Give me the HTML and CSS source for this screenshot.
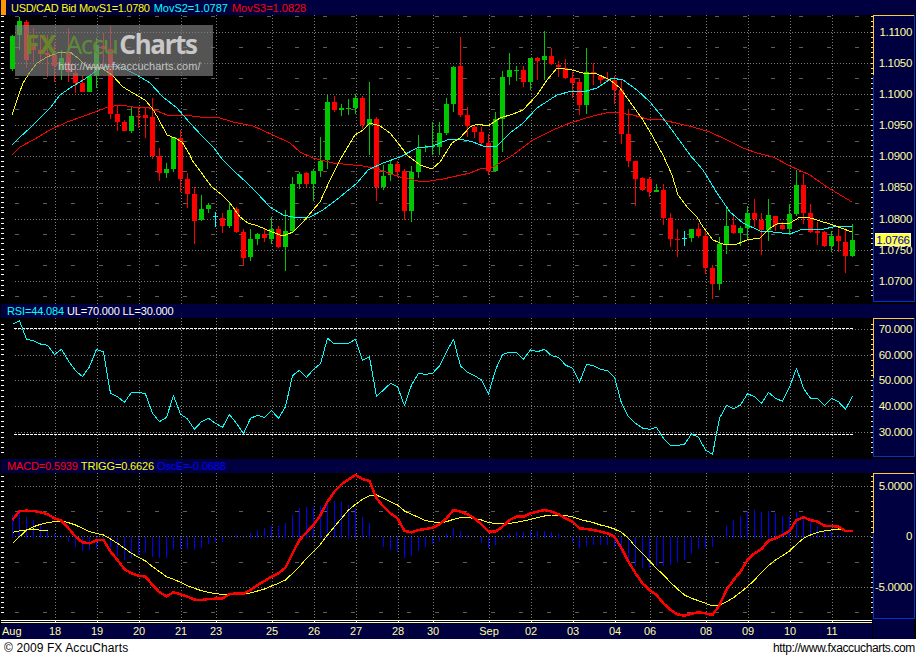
FILE: index.html
```html
<!DOCTYPE html>
<html lang="en">
<head>
    <meta charset="UTF-8">
    <meta name="viewport" content="width=device-width, initial-scale=1.0">
    <title>USD/CAD - FX AccuCharts</title>
    <link rel="stylesheet" href="styles.css">
</head>
<body>
    <div class="chart">
        <div class="panel-head panel-head-main">
            <span class="symbol-tab"></span>
            <span class="label-yellow label-tight">USD/CAD Bid MovS1=1.0780</span>
            <span class="label-cyan">MovS2=1.0787</span>
            <span class="label-red">MovS3=1.0828</span>
        </div>
        <div class="panel panel-price">
            <svg id="price" width="916" height="289" viewBox="0 15 916 289"></svg>
            <div class="watermark">
                <div class="watermark-logo"><span class="logo-fx">FX</span><span class="logo-accu">Accu</span><span class="logo-charts">Charts</span></div>
                <div class="watermark-url">http://www.fxaccucharts.com/</div>
            </div>
        </div>
        <div class="panel-head">
            <span class="label-cyan">RSI=44.084</span>
            <span class="label-white">UL=70.000 LL=30.000</span>
        </div>
        <div class="panel panel-rsi">
            <svg id="rsi" width="916" height="141" viewBox="0 318 916 141"></svg>
        </div>
        <div class="panel-head">
            <span class="label-red">MACD=0.5939</span>
            <span class="label-yellow">TRIGG=0.6626</span>
            <span class="label-blue">OscE=-0.0688</span>
        </div>
        <div class="panel panel-macd">
            <svg id="macd" width="916" height="147" viewBox="0 473 916 147"></svg>
        </div>
        <div class="panel panel-dates">
            <svg id="dates" width="916" height="19" viewBox="0 620 916 19"></svg>
        </div>
    </div>
    <div class="footer">
        <span class="footer-copy">© 2009 FX AccuCharts</span>
        <span class="footer-url">http://www.fxaccucharts.com</span>
    </div>
    <script src="chart.js"></script>
</body>
</html>
```
FILE: styles.css
```css
body{
    margin: 0;
    background-color: white;
    font-family: "Liberation Sans", Arial, sans-serif;
    font-size: 11px;
}
.chart{
    background-color: black;
    width: 916px;
    height: 639px;
    overflow: hidden;
}
.panel{
    position: relative;
}
.panel svg{
    display: block;
}
.panel-price{
    height: 289px;
}
.panel-rsi{
    height: 141px;
}
.panel-macd{
    height: 147px;
}
.panel-dates{
    height: 19px;
}
.panel-head{
    display: flex;
    align-items: center;
    gap: 3px;
    height: 14px;
    margin-left: 1px;
    padding-left: 6px;
    background-color: #000040;
    white-space: nowrap;
    letter-spacing: -0.15px;
}
.panel-head-main{
    gap: 4px;
    height: 15px;
    padding-left: 0;
    letter-spacing: 0;
}
.symbol-tab{
    width: 5px;
    height: 15px;
    margin-right: 1px;
    background-color: #ff9900;
}
.label-tight{
    letter-spacing: -0.3px;
}
.label-yellow{
    color: #ffff00;
}
.label-cyan{
    color: #00ffff;
}
.label-red{
    color: #ff0000;
}
.label-white{
    color: #ffffff;
}
.label-blue{
    color: #0000ff;
}
.watermark{
    position: absolute;
    left: 15px;
    top: 10px;
    width: 198px;
    height: 51px;
    background-color: rgba(128, 128, 128, 0.66);
}
.watermark-logo{
    display: flex;
    height: 34px;
    padding-left: 10px;
    font-family: "Noto Sans", sans-serif;
    font-size: 26px;
    line-height: 38px;
    white-space: nowrap;
}
.logo-fx{
    margin-right: 9px;
    color: #6a8528;
    font-weight: bold;
}
.logo-accu{
    margin-right: 2px;
    color: #5f8a3c;
    letter-spacing: -1.5px;
}
.logo-charts{
    color: #c8c8c8;
    font-weight: bold;
    letter-spacing: -1.3px;
}
.watermark-url{
    padding-left: 43px;
    color: #c4c4c4;
    font-size: 11px;
    line-height: 14px;
}
.footer{
    display: flex;
    justify-content: space-between;
    height: 18px;
    padding: 1px 1px 0 4px;
    color: black;
    font-size: 12px;
    line-height: 16px;
}
.footer-copy{
    letter-spacing: 0.1px;
}
.footer-url{
    letter-spacing: -0.37px;
}

/* chart marks */
.up{
    fill: #00c800;
}
.down{
    fill: #ff0000;
}
.doji{
    fill: #00ffff;
}
.grid-major, .grid-minor, .grid-date, .level, .ma, .tick, .frame{
    fill: none;
    shape-rendering: crispEdges;
}
.grid-major, .grid-date{
    stroke: #7a7a7a;
    stroke-dasharray: 1 2;
}
.grid-minor{
    stroke: #5c5c5c;
    stroke-dasharray: 4 24;
}
.level{
    stroke: #ffffff;
    stroke-dasharray: 3 1;
}
.ma{
    stroke-linejoin: round;
}
.ma-yellow{
    stroke: #ffff00;
}
.ma-cyan{
    stroke: #00ffff;
}
.ma-red{
    stroke: #ff0000;
}
.ma-macd{
    stroke: #ff0000;
    stroke-width: 2.5;
}
.hist{
    stroke: #0000ff;
    fill: none;
    shape-rendering: crispEdges;
}
.tick-left{
    stroke: #ffffff;
}
.tick-right{
    stroke: #ffe080;
}
.axis-fill{
    fill: #000040;
}
.frame-gold{
    stroke: #ffcc33;
}
.frame-blue{
    stroke: #0033cc;
}
.axis-label{
    fill: #ffffa0;
    font-size: 11.5px;
    letter-spacing: -0.3px;
    text-anchor: end;
}
.date-label{
    fill: #ffffa0;
    font-size: 11px;
    text-anchor: middle;
}
.date-first{
    text-anchor: start;
}
.date-line-white{
    stroke: #ffffff;
    shape-rendering: crispEdges;
}
.date-line-yellow{
    stroke: #ffffa0;
    shape-rendering: crispEdges;
}
.last-price-box{
    fill: #ffff40;
    stroke: #ffffc0;
    shape-rendering: crispEdges;
}
.last-price{
    fill: #0000c0;
    font-size: 11.5px;
    letter-spacing: -0.3px;
    text-anchor: middle;
}
```
FILE: chart.js
```js
// candle x = 12 + 7 * index, 121 candles
// [bodyTop, bodyBottom, wickTop, wickBottom, kind]
var U = 'up', D = 'down', X = 'doji';
var candles = [
    [36,69,35,71,U],[21,35,17,50,U],[22,60,20,68,D],[46,50,28,62,D],[50,54,35,63,D],[53,55,35,77,D],
    [55,66,43,82,D],[58,70,50,80,U],[53,72,28,82,D],[73,83,67,93,D],[83,92,75,92,D],[76,92,75,92,U],
    [45,76,38,88,U],[46,49,33,67,D],[49,114,26,119,D],[114,122,106,131,D],[122,131,120,131,D],[116,131,107,133,U],
    [116,117,107,128,D],[115,118,107,138,D],[117,156,98,159,D],[156,173,148,181,D],[169,173,163,178,U],[137,169,137,172,U],
    [138,179,130,192,D],[179,194,173,208,D],[194,221,187,244,D],[209,220,195,221,U],[205,209,203,213,U],[216,217,212,227,X],
    [218,226,213,233,D],[210,226,203,228,U],[209,232,207,233,D],[232,258,229,266,D],[239,257,229,261,U],[234,239,233,245,U],
    [234,238,229,242,D],[229,239,217,244,U],[229,247,226,248,D],[231,247,210,271,U],[184,231,177,232,U],[174,184,172,189,U],
    [173,184,172,187,D],[171,184,169,201,U],[161,171,137,177,U],[102,160,95,169,U],[102,110,96,112,D],[108,110,104,116,U],
    [108,109,99,115,U],[98,108,94,114,U],[98,125,96,129,D],[119,125,82,155,U],[119,187,117,201,D],[176,187,165,190,U],
    [164,175,160,181,U],[164,172,161,177,D],[171,211,169,220,D],[172,211,166,222,U],[149,172,135,178,U],[147,148,145,152,U],
    [146,147,122,155,U],[133,147,122,155,U],[104,133,98,135,U],[67,104,66,112,U],[66,115,37,117,D],[115,126,107,137,D],
    [127,132,125,138,D],[132,143,127,145,D],[143,171,134,175,D],[119,171,112,172,U],[77,119,71,152,U],[70,77,53,85,U],
    [70,71,66,81,U],[70,82,66,87,D],[58,82,58,90,U],[58,61,57,80,D],[56,60,31,80,U],[56,64,48,65,D],
    [65,67,61,77,D],[68,78,59,79,D],[78,83,72,98,D],[82,105,78,115,D],[72,105,48,114,U],[72,73,63,85,D],
    [76,80,75,84,D],[80,81,72,82,D],[80,90,76,104,D],[90,134,80,144,D],[134,161,109,167,D],[161,179,161,206,D],
    [178,190,177,191,D],[179,192,177,197,D],[190,192,184,192,U],[190,218,184,225,D],[218,239,213,247,D],[239,240,229,257,D],
    [238,239,231,246,X],[229,238,229,242,U],[229,236,223,238,D],[236,268,229,274,D],[268,284,265,299,D],[244,284,237,290,U],
    [226,244,206,254,U],[225,233,216,234,D],[228,233,226,246,U],[213,228,206,240,U],[213,219,199,227,D],[220,230,213,255,D],
    [215,230,199,241,U],[216,225,216,231,D],[225,229,222,230,D],[214,229,204,235,U],[185,214,170,216,U],[185,213,174,224,D],
    [213,232,204,233,D],[231,233,222,245,D],[232,246,231,247,D],[236,246,231,252,U],[236,241,229,252,D],[242,256,228,273,D],
    [240,256,224,257,U]
];

// moving averages, page coordinates
var movYellow = [[12,115],[18,97],[23,83],[30,72],[37,63],[47,57],[60,52],[70,52],[78,58],[87,67],[100,67],[112,75],[123,87],[133,93],[145,100],[152,108],[158,118],[167,135],[175,138],[182,142],[190,155],[192,160],[203,175],[212,187],[222,195],[230,203],[240,217],[248,223],[258,226],[272,232],[283,236],[293,232],[303,222],[313,210],[320,202],[330,180],[340,160],[355,135],[363,130],[370,123],[380,126],[390,133],[398,143],[407,155],[420,165],[432,169],[440,162],[452,143],[460,138],[470,127],[477,124],[488,126],[500,118],[513,114],[523,110],[537,95],[547,80],[557,68],[572,70],[583,73],[595,73],[610,80],[620,88],[630,102],[643,120],[653,137],[663,155],[672,175],[678,195],[688,208],[697,217],[703,227],[713,240],[725,245],[737,244],[747,240],[760,238],[770,228],[777,224],[790,223],[800,217],[807,217],[817,220],[833,225],[852,232]];
var movCyan = [[12,145],[20,137],[30,128],[40,118],[50,108],[60,95],[70,88],[88,77],[100,68],[110,66],[123,68],[137,75],[150,83],[163,97],[177,108],[190,123],[203,137],[213,147],[223,160],[233,170],[247,183],[257,193],[270,207],[283,215],[298,218],[310,217],[323,210],[340,197],[357,183],[368,170],[383,163],[400,157],[417,148],[433,146],[447,140],[460,139],[473,142],[483,146],[497,146],[510,133],[523,123],[537,108],[557,95],[572,91],[583,92],[597,88],[612,78],[623,80],[637,90],[650,102],[663,118],[677,137],[690,155],[703,170],[717,193],[730,212],[743,223],[760,231],[773,232],[790,234],[803,229],[820,230],[837,226],[852,227]];
var movRed = [[12,155],[20,147],[33,140],[50,130],[67,122],[87,115],[100,110],[108,107],[120,105],[133,107],[147,107],[157,111],[167,115],[183,115],[200,117],[217,117],[233,122],[253,126],[273,135],[290,143],[300,152],[313,158],[333,163],[363,166],[377,169],[400,177],[423,182],[443,179],[470,173],[480,169],[493,167],[513,155],[533,140],[553,130],[570,123],[593,116],[610,112],[613,112],[633,115],[647,119],[663,120],[680,124],[693,127],[710,132],[727,140],[743,148],[757,153],[773,157],[790,166],[810,175],[827,187],[852,202]];

// one y per candle, in thirds of a pixel below the given origin
var rsiA = [73,62,118,122,132,136,163,148,183,212,230,200,148,156,280,290,307,277,276,282,340,365,352,287,342,357,388,365,355,370,382,344,370,401,355,346,352,331,355,320,227,211,232,208,191,115,132,130,130,118,181,171,289,270,250,260,317,255,220,223,220,198,155,118];
var rsiB = [198,217,227,240,282,210,163,157,157,178,150,155,148,167,172,195,205,247,193,197,208,212,232,310,350,370,384,388,382,415,436,436,433,402,412,450,463,355,316,326,315,281,290,310,277,295,304,262,205,265,295,295,316,295,305,328,288];
var macdA = [195,168,167,168,172,178,190,197,220,245,262,265,256,255,290,315,343,355,362,365,390,412,424,412,418,425,434,435,432,431,430,418,415,416,405,390,378,365,355,338,295,255,232,210,180,140,110,88,73,60,72,78,130,155,175,190,228,232,225,222,218,208,190,165];
var macdB = [170,178,190,208,230,230,215,195,185,185,175,170,165,170,178,190,200,220,222,225,230,235,245,280,320,355,385,405,420,445,465,478,482,476,472,475,480,450,405,375,350,315,295,282,257,250,240,228,195,187,195,200,212,213,215,228,228];
var triggA = [265,245,226,215,208,203,200,198,203,210,220,230,235,240,252,265,280,295,307,318,335,350,365,373,382,392,400,407,412,416,418,418,418,418,414,408,402,393,385,375,355,335,310,290,268,240,215,190,165,148,133,122,120,130,140,150,168,178,187,197,200,204,200,193];
var triggB = [188,188,190,195,203,205,207,205,202,198,193,188,183,180,180,182,185,193,198,203,210,215,222,232,250,275,295,318,340,360,382,402,420,430,437,445,453,450,440,428,412,395,375,352,332,315,302,288,268,250,240,232,228,225,222,226,228];
var histA = [180,170,185,195,205,222,238,243,262,275,288,285,280,252,290,302,315,310,300,295,305,310,308,285,282,283,285,280,268,262,260,247,240,247,233,225,220,212,212,204,180,158,155,155,153,135,137,140,150,158,185,204,250,275,285,290,308,302,288,276,268,258,238,218];
var histB = [228,240,250,265,278,270,252,238,232,232,228,228,228,232,238,250,262,278,274,270,270,270,276,295,320,333,340,338,333,332,330,322,316,297,282,280,275,245,213,195,183,168,165,170,168,173,182,183,170,182,195,213,225,232,240,250,247];

var dateMarks = [[55,'18'],[97,'19'],[139,'20'],[181,'21'],[216,'23'],[272,'25'],[314,'26'],[356,'27'],[398,'28'],[433,'30'],[489,'Sep'],[531,'02'],[573,'03'],[615,'04'],[650,'06'],[706,'08'],[748,'09'],[790,'10'],[832,'11']];

function candleX(idx) {
    return 12 + 7 * idx;
}

function seriesPoints(list, origin) {
    return list.map(function (v, idx) {
        return (candleX(idx) + 0.5) + ',' + (origin + v / 3);
    }).join(' ');
}

function polyline(points, cls) {
    return '<polyline class="ma ' + cls + '" points="' + points + '"/>';
}

function hLine(y, x1, x2, cls) {
    return '<line class="' + cls + '" x1="' + x1 + '" x2="' + x2 + '" y1="' + (y + 0.5) + '" y2="' + (y + 0.5) + '"/>';
}

function vLine(x, y1, y2, cls) {
    return '<line class="' + cls + '" x1="' + (x + 0.5) + '" x2="' + (x + 0.5) + '" y1="' + y1 + '" y2="' + y2 + '"/>';
}

// grid, ticks and right axis for one panel
function panelFrame(opt) {
    var html = '';
    dateMarks.forEach(function (m) {
        html += vLine(m[0], opt.top, opt.rowEnd, 'grid-date');
    });
    opt.labels.forEach(function (l) {
        html += hLine(l[0], 15, 872, 'grid-major');
    });
    (opt.minors || []).forEach(function (y) {
        html += hLine(y, 15, 872, 'grid-minor');
    });
    for (var y = opt.tickStart; y < opt.bottom - 1; y += opt.tickStep) {
        var ty = Math.round(y);
        if (ty > opt.top) {
            html += hLine(ty, 1, 4, 'tick tick-left');
            html += hLine(ty, 871, 873, 'tick tick-right');
        }
    }
    return html;
}

function panelAxis(opt) {
    var html = '<rect class="axis-fill" x="873" y="' + opt.top + '" width="41" height="' + (opt.bottom - opt.top) + '"/>';
    html += hLine(opt.top, 873, 915, 'frame frame-gold');
    html += hLine(opt.bottom, 873, 915, 'frame frame-blue');
    html += vLine(914, opt.top, opt.bottom, 'frame frame-blue');
    html += vLine(873, opt.top + 60, opt.bottom, 'frame frame-blue');
    html += vLine(873, opt.top, opt.top + 60, 'frame frame-gold');
    opt.labels.forEach(function (l) {
        html += '<text class="axis-label" x="912" y="' + (l[0] + 4) + '">' + l[1] + '</text>';
    });
    return html;
}

function renderPrice() {
    var opt = {
        top: 15, bottom: 301, rowEnd: 304, tickStart: 16, tickStep: 5.17,
        labels: [[32,'1.1100'],[63,'1.1050'],[94,'1.1000'],[125,'1.0950'],[156,'1.0900'],[187,'1.0850'],[219,'1.0800'],[250,'1.0750'],[281,'1.0700']],
        minors: [16,47,78,109,141,171,203,234,265,296]
    };
    var html = panelFrame(opt);
    candles.forEach(function (c, idx) {
        var x = candleX(idx);
        html += '<rect class="' + c[4] + '" x="' + x + '" y="' + c[2] + '" width="1" height="' + (c[3] - c[2]) + '" shape-rendering="crispEdges"/>';
        html += '<rect class="' + c[4] + '" x="' + (x - 2) + '" y="' + c[0] + '" width="5" height="' + (c[1] - c[0]) + '" shape-rendering="crispEdges"/>';
    });
    html += polyline(movRed.join(' '), 'ma-red');
    html += polyline(movCyan.join(' '), 'ma-cyan');
    html += polyline(movYellow.join(' '), 'ma-yellow');
    html += panelAxis(opt);
    html += '<rect class="last-price-box" x="875.5" y="233.5" width="35" height="12"/>';
    html += '<text class="last-price" x="893" y="244">1.0766</text>';
    document.getElementById('price').innerHTML = html;
}

function renderRsi() {
    var opt = {
        top: 318, bottom: 456, rowEnd: 459, tickStart: 323.5, tickStep: 5.15,
        labels: [[329,'70.000'],[355,'60.000'],[380,'50.000'],[406,'40.000'],[432,'30.000']]
    };
    var html = panelFrame(opt);
    html += hLine(328, 14, 853, 'level');
    html += hLine(434, 14, 853, 'level');
    html += polyline(seriesPoints(rsiA.concat(rsiB), 300), 'ma-cyan');
    html += panelAxis(opt);
    document.getElementById('rsi').innerHTML = html;
}

function renderMacd() {
    var opt = {
        top: 473, bottom: 618, rowEnd: 620, tickStart: 476, tickStep: 5.05,
        labels: [[486,'5.0000'],[536,'0'],[587,'-5.0000']],
        minors: [511,562,612]
    };
    var html = panelFrame(opt);
    histA.concat(histB).forEach(function (v, idx) {
        var y = 455 + v / 3;
        var y1 = Math.min(y, 537), y2 = Math.max(y, 538);
        html += vLine(candleX(idx), y1, y2, 'hist');
    });
    html += polyline(seriesPoints(triggA.concat(triggB), 455), 'ma-yellow');
    html += polyline(seriesPoints(macdA.concat(macdB), 455), 'ma-macd');
    html += polyline(seriesPoints(triggA.concat(triggB).slice(-6), 455), 'ma-yellow');
    html += panelAxis(opt);
    html += '<rect class="axis-fill" x="873" y="619" width="41" height="1"/>';
    document.getElementById('macd').innerHTML = html;
}

function renderDates() {
    var html = '<rect class="axis-fill" x="1" y="623" width="871" height="16"/>';
    html += '<rect class="axis-fill" x="873" y="620" width="41" height="19"/>';
    html += hLine(620, 1, 872, 'date-line-white');
    html += hLine(622, 1, 872, 'date-line-yellow');
    html += '<text class="date-label date-first" x="2" y="635">Aug</text>';
    dateMarks.forEach(function (m) {
        html += vLine(m[0], 620, 623, 'date-line-yellow');
        html += '<text class="date-label" x="' + m[0] + '" y="635">' + m[1] + '</text>';
    });
    document.getElementById('dates').innerHTML = html;
}

renderPrice();
renderRsi();
renderMacd();
renderDates();
```
